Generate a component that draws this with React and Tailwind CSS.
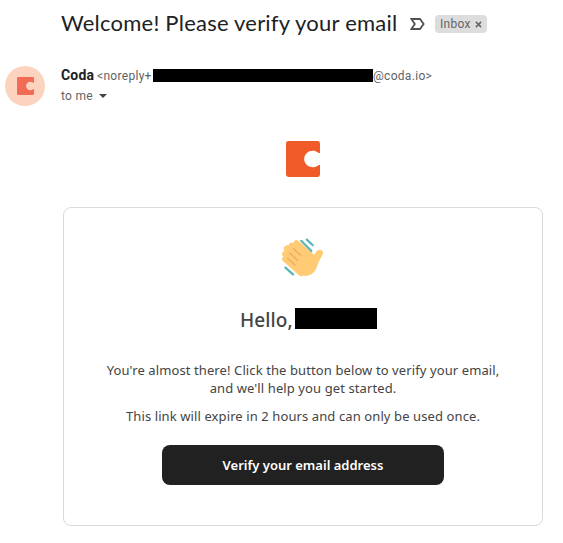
import React from 'react';

const CodaMark = ({ className }) => (
  <svg viewBox="0 0 34 36" className={className}>
    <path
      fill="currentColor"
      d="M2.4 0H31.6Q34 0 34 2.4V11.9C32.3 12.6 31.2 9.7 26.4 9.7A8.3 8.3 0 0 0 26.4 26.3C31.2 26.3 32.3 23.4 34 24.1V33.6Q34 36 31.6 36H2.4Q0 36 0 33.6V2.4Q0 0 2.4 0Z"
    />
  </svg>
);

const WavingHand = () => (
  <svg viewBox="0 0 44 42" className="w-[44px] h-[42px]" fill="none" strokeLinecap="round">
    <g stroke="#ffcb74" strokeWidth="6.2">
      <path d="M10.6 8.8L26 22" />
      <path d="M6 11.6L24 28" />
      <path d="M4.2 17L22 33" />
      <path d="M4.2 22L20 36" />
      <path d="M15.5 6.2L30 19" />
    </g>
    <path
      fill="#ffcb74"
      d="M16 6L31 19.5C33.5 18.5 34 15 36.5 13.4C39.5 11.6 43 14 41.8 17C40 21.5 37.5 24 36.5 28C35.5 33 32 37.5 27 38.6C22 39.8 18.5 37.5 15.5 34.5L8 20Z"
    />
    <g stroke="#e9ad62" strokeWidth="1.3">
      <path d="M12.4 11.6L19.5 18.2" />
      <path d="M8.8 16L16.5 23.2" />
      <path d="M6.8 21.4L14 28" />
    </g>
    <g stroke="#5bb5b2" strokeWidth="2.2">
      <path d="M20.2 3.8L30.4 14" />
      <path d="M25.8 2.6L31.8 8.2" />
      <path d="M4.4 30.6L12 37.4" />
    </g>
  </svg>
);

const MailHeader = () => (
  <header>
    <div className="flex items-center h-[30px] pl-[61px]">
      <h1 className="w-[349px] shrink-0 mb-[2px] whitespace-nowrap text-[22px] leading-[30px] tracking-[0.22px] text-[#202124]">
        Welcome! Please verify your email
      </h1>
      <svg viewBox="0 0 15 12" className="w-[15px] h-[12px] shrink-0" fill="none" stroke="#505050" strokeWidth="1.8">
        <path d="M1.4 1H10L13.6 6L10 11H1.4L4.8 6Z" />
      </svg>
      <span className="flex items-center ml-[10px] h-[18px] w-[52px] pl-[5px] rounded-[4px] bg-[#ddd] font-['Roboto',sans-serif] text-[12px] tracking-[0.3px] text-[#666]">
        Inbox
        <svg viewBox="0 0 8 8" className="ml-[4px] w-[7px] h-[7px]" stroke="#666" strokeWidth="1.7">
          <path d="M1 1L7 7M7 1L1 7" />
        </svg>
      </span>
    </div>

    <div className="flex mt-[27px] pl-[5px] font-['Roboto',sans-serif]">
      <div className="flex items-center justify-center size-[40px] rounded-full bg-[#fbd3bf]">
        <CodaMark className="w-[17px] h-[18px] text-[#f16b57]" />
      </div>
      <div className="ml-[16px] text-[12px] text-[#5f6368]">
        <div className="flex items-center h-[20px] whitespace-nowrap tracking-[0.3px]">
          <span className="w-[36px] mb-[2px] text-[14px] font-bold tracking-[0.2px] text-[#202124]">Coda</span>
          <span className="w-[56px]">&lt;noreply+</span>
          <span className="w-[220px] h-[13px] mb-px bg-black" />
          <span>@coda.io&gt;</span>
        </div>
        <div className="flex items-center h-[20px] tracking-[0.3px]">
          to me
          <span className="ml-[6px] border-x-4 border-t-4 border-x-transparent border-t-[#444]" />
        </div>
      </div>
    </div>
  </header>
);

const App = () => {
  return (
    <div className="min-h-[543px] bg-white pt-[9px] font-['Lato',sans-serif]">
      <MailHeader />

      <main className="ml-[63px] w-[480px] font-['Noto_Sans',sans-serif]">
        <CodaMark className="block ml-[223px] mt-[35px] w-[34px] h-[36px] text-[#f15a29]" />

        <section className="flex flex-col items-center mt-[30px] h-[319px] pt-[29px] rounded-[8px] border border-[#dadada] text-[#444]">
          <WavingHand />
          <div className="flex items-center w-full h-[24px] mt-[29px] pl-[176px]">
            <h2 className="w-[55px] whitespace-nowrap text-[19px] leading-[24px] font-medium tracking-[0.1px]">Hello,</h2>
            <span className="w-[82px] h-[21px] mb-[4px] bg-black" />
          </div>

          <div className="mt-[29px] text-center text-[13px] leading-[18px] tracking-[0.1px] whitespace-nowrap">
            <p>
              You're almost there! Click the button below to verify your email,
              <br />
              and we'll help you get started.
            </p>
            <p className="mt-[10px]">This link will expire in 2 hours and can only be used once.</p>
          </div>

          <button className="mt-[20px] w-[282px] h-[40px] pt-[2px] rounded-[8px] bg-[#212121] text-[13px] font-semibold text-white">
            Verify your email address
          </button>
        </section>
      </main>
    </div>
  );
};

export default App;
